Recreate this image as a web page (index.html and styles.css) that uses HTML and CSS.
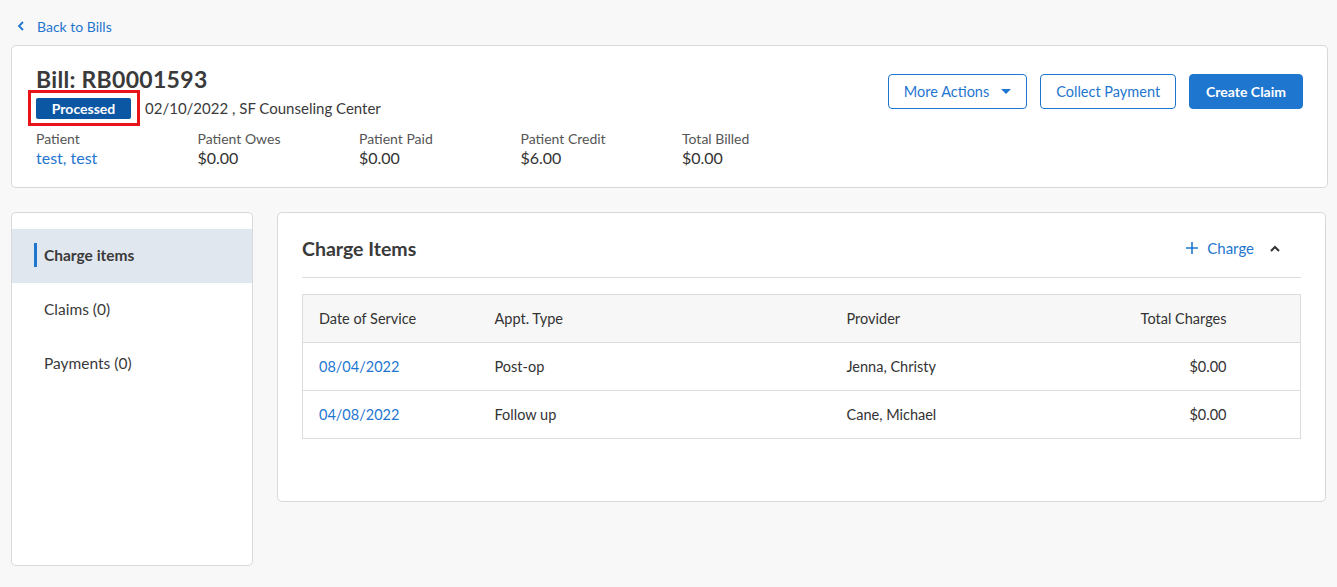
FILE: index.html
```html
<!DOCTYPE html>
<html>
<head>
  <title>Bill RB0001593</title>
  <link rel="stylesheet" href="styles.css">
</head>
<body>
  <a class="back" href="#">
    <svg width="8" height="10" viewBox="0 0 8 10"><path d="M6 1 L2 5 L6 9" fill="none" stroke="#1f76cf" stroke-width="1.8"/></svg>
    <span>Back to Bills</span>
  </a>

  <div class="card header">
    <div class="head-left">
      <h1>Bill: RB0001593</h1>
      <div class="status-row">
        <span class="badge-wrap"><span class="badge">Processed</span></span>
        <span class="meta">02/10/2022 , SF Counseling Center</span>
      </div>
      <div class="stats">
        <div class="stat"><div class="label">Patient</div><a class="value link" href="#">test, test</a></div>
        <div class="stat"><div class="label">Patient Owes</div><div class="value">$0.00</div></div>
        <div class="stat"><div class="label">Patient Paid</div><div class="value">$0.00</div></div>
        <div class="stat"><div class="label">Patient Credit</div><div class="value">$6.00</div></div>
        <div class="stat"><div class="label">Total Billed</div><div class="value">$0.00</div></div>
      </div>
    </div>
    <div class="actions">
      <button class="btn outline">More Actions
        <svg width="10" height="6" viewBox="0 0 10 6"><path d="M0 0 H10 L5 5 Z" fill="#1f76cf"/></svg>
      </button>
      <button class="btn outline">Collect Payment</button>
      <button class="btn primary">Create Claim</button>
    </div>
  </div>

  <div class="main">
    <div class="card sidebar">
      <div class="nav-item active"><span>Charge items</span></div>
      <div class="nav-item"><span>Claims (0)</span></div>
      <div class="nav-item"><span>Payments (0)</span></div>
    </div>

    <div class="card content">
      <div class="content-head">
        <h2>Charge Items</h2>
        <div class="head-tools">
          <a class="add" href="#">
            <svg width="12" height="12" viewBox="0 0 12 12"><path d="M6 0 V12 M0 6 H12" stroke="#1f76cf" stroke-width="1.6"/></svg>
            Charge
          </a>
          <svg width="10" height="7" viewBox="0 0 10 7"><path d="M1 6 L5 2 L9 6" fill="none" stroke="#333" stroke-width="2"/></svg>
        </div>
      </div>

      <table class="charges">
        <colgroup>
          <col class="c-date"><col class="c-type"><col class="c-prov"><col class="c-total"><col class="c-pad">
        </colgroup>
        <thead>
          <tr><th>Date of Service</th><th>Appt. Type</th><th>Provider</th><th class="right">Total Charges</th><th></th></tr>
        </thead>
        <tbody>
          <tr><td><a href="#">08/04/2022</a></td><td>Post-op</td><td>Jenna, Christy</td><td class="right">$0.00</td><td></td></tr>
          <tr><td><a href="#">04/08/2022</a></td><td>Follow up</td><td>Cane, Michael</td><td class="right">$0.00</td><td></td></tr>
        </tbody>
      </table>
    </div>
  </div>
</body>
</html>
```

FILE: styles.css
```css
body { margin: 0; padding: 0 9px 0 11px; background: #f8f8f8; font-family: Lato, "Liberation Sans", sans-serif; color: #333; font-size: 15px; }
a { color: #1f76cf; text-decoration: none; }

.back { display: flex; align-items: center; gap: 12px; height: 20px; padding: 16px 0 9px 6px; font-size: 14px; }

.card { background: #fff; border: 1px solid #d8d8d8; border-radius: 5px; box-sizing: border-box; }

.header { display: flex; justify-content: space-between; height: 143px; padding: 19px 24px 0 24px; }
.header h1 { margin: 0; font-size: 23px; font-weight: 700; color: #3a3a3a; line-height: 28px; letter-spacing: 0.3px; }
.status-row { display: flex; align-items: center; margin-top: -3px; }
.badge-wrap { border: 3px solid #e8141a; padding: 5px 6px 4px 5px; margin-left: -8px; display: inline-block; }
.badge { display: inline-block; background: #0b57a4; color: #fff; font-weight: 700; font-size: 14px; width: 95px; height: 21px; line-height: 21px; text-align: center; border-radius: 2px; }
.meta { margin-left: 5px; font-size: 15px; color: #3a3a3a; }

.stats { display: flex; margin-top: 4px; }
.stat { width: 161.5px; }
.label { font-size: 14px; color: #555; line-height: 18px; }
.value { display: block; font-size: 16px; line-height: 20px; color: #333; }
.value.link { color: #1f76cf; }

.actions { display: flex; gap: 13px; padding-top: 9px; }
.btn { height: 35px; font-family: inherit; font-size: 14.5px; border-radius: 4px; padding: 0 15px; cursor: pointer; display: flex; align-items: center; gap: 12px; }
.btn.outline { background: #fff; border: 1px solid #1f76cf; color: #1f76cf; }
.btn.primary { background: #1f76cf; border: 1px solid #1f76cf; color: #fff; font-weight: 700; padding: 0 16px; font-size: 14px; }

.main { display: flex; gap: 24px; margin-top: 24px; align-items: flex-start; }
.sidebar { width: 242px; height: 354px; padding-top: 16px; }
.nav-item { height: 54px; display: flex; align-items: center; padding-left: 32px; font-size: 15.5px; color: #3a3a3a; }
.nav-item span { margin-top: -3px; }
.nav-item.active { background: #e1e7ef; font-weight: 700; padding-left: 22px; }
.nav-item.active span { border-left: 3px solid #1f76cf; padding: 3px 0 3px 7px; margin-top: -3px; }

.content { flex: 1; height: 290px; padding: 0 24px 0 24px; margin-right: 2px; }
.content-head { display: flex; justify-content: space-between; align-items: center; height: 64px; border-bottom: 1px solid #dcdcdc; }
.content-head h2 { margin: 6px 0 0 0; font-size: 19.5px; font-weight: 700; color: #3a3a3a; }
.head-tools { display: flex; align-items: center; gap: 16px; margin-top: 6px; padding-right: 21px; }
.add { display: flex; align-items: center; gap: 9px; font-size: 15px; }

.charges { width: 100%; table-layout: fixed; border-collapse: collapse; margin-top: 16px; border: 1px solid #dcdcdc; font-size: 14.5px; }
.charges th { background: #f7f7f7; font-weight: 400; text-align: left; height: 47px; padding: 0; color: #333; }
.charges td { height: 47px; padding: 0; border-top: 1px solid #dcdcdc; color: #333; }
.charges th:first-child, .charges td:first-child { padding-left: 16px; }
.charges .right { text-align: right; }
.c-date { width: 192px; }
.c-type { width: 352px; }
.c-total { width: 200px; }
.c-pad { width: 74px; }
```
